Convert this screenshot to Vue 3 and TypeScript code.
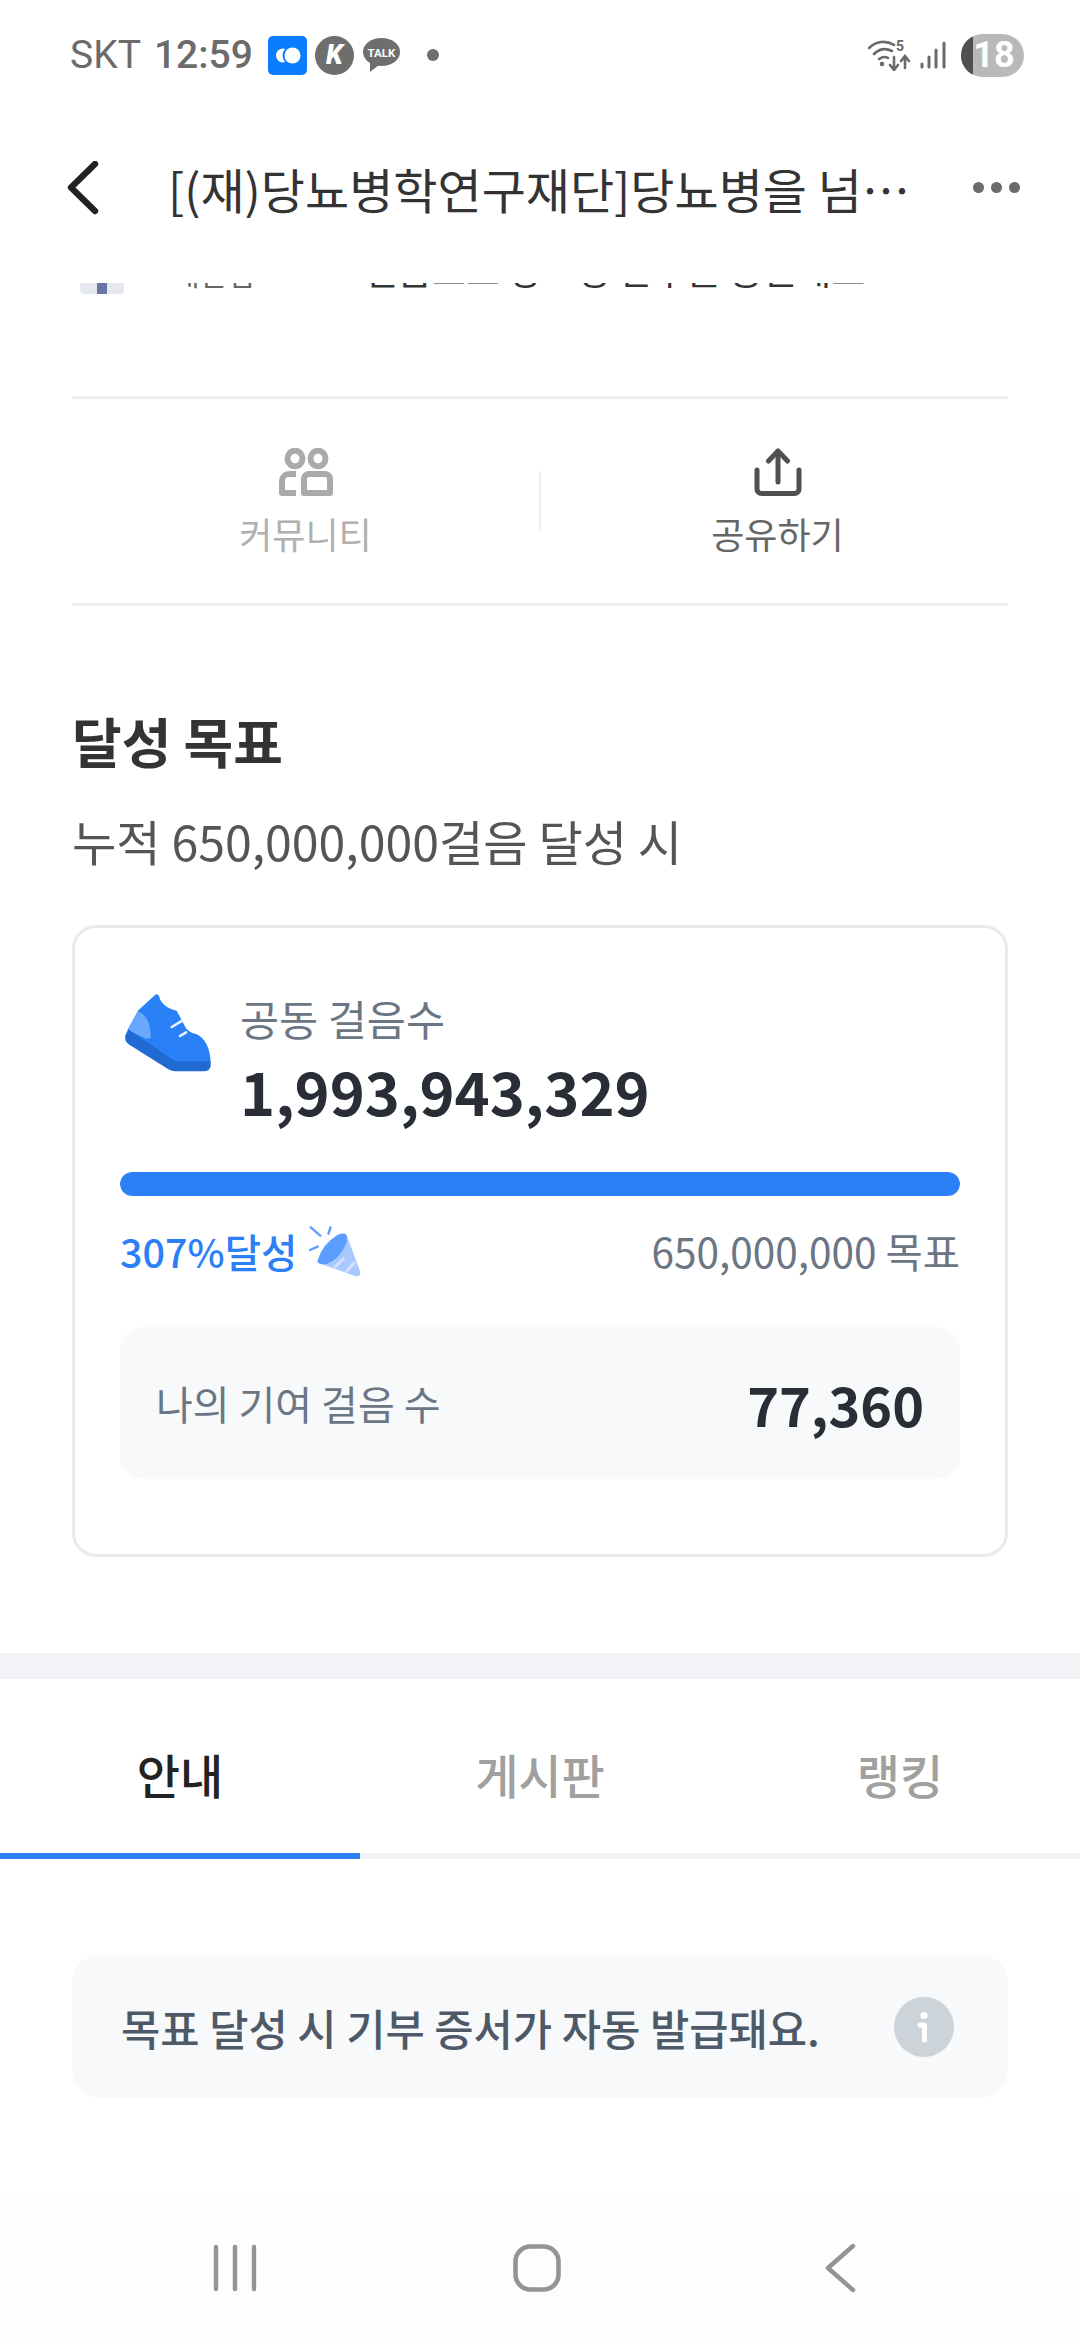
<script setup lang="ts">
const tabs = [
  { label: '안내', active: true },
  { label: '게시판', active: false },
  { label: '랭킹', active: false },
]
const progress = 100
</script>

<template>
  <div class="page">
    <div class="status">
      <div class="status-left">
        <span class="carrier">SKT</span>
        <span class="time">12:59</span>
        <svg class="ic-toss" width="39" height="39" viewBox="0 0 39 39">
          <rect width="39" height="39" rx="5" fill="#0a7cff" />
          <circle cx="15" cy="19.5" r="7" fill="#fff" />
          <circle cx="24.5" cy="19.5" r="10" fill="#0a7cff" />
          <circle cx="24.5" cy="19.5" r="8" fill="#fff" />
        </svg>
        <span class="ic-k">K</span>
        <svg class="ic-talk" width="37" height="34" viewBox="0 0 37 34">
          <ellipse cx="18.5" cy="14" rx="18.5" ry="14" fill="#6e6e6e" />
          <path d="M7 24 L7 34 L16 27 Z" fill="#6e6e6e" />
          <text x="18.5" y="19" text-anchor="middle" class="talk-text">TALK</text>
        </svg>
        <span class="dot"></span>
      </div>
      <div class="status-right">
        <svg width="43" height="32" viewBox="0 0 43 32" fill="none" stroke="#6a6a6a" stroke-width="2.6" stroke-linecap="round">
          <path d="M1 9 C8 2 18 1 26 6" />
          <path d="M6 15 C12 9 18 9 24 12" />
          <path d="M11 20 C14 18 17 17 20 19" />
          <circle cx="14" cy="25" r="1" />
          <path d="M26 18 V30 M22 26 L26 31 L30 26" />
          <path d="M37 29 V18 M33 22 L37 17 L41 22" />
          <text x="28" y="12" class="wifi-5">5</text>
        </svg>
        <svg width="26" height="28" viewBox="0 0 26 28" fill="none" stroke="#6a6a6a" stroke-width="3" stroke-linecap="round">
          <path d="M2 23 V26" />
          <path d="M9 16 V26" />
          <path d="M16 9 V26" />
          <path d="M24 2 V26" />
        </svg>
        <div class="battery"><span class="battery-fill"></span><span class="battery-num">18</span></div>
      </div>
    </div>

    <header class="topbar">
      <svg class="back" width="32" height="54" viewBox="0 0 32 54" fill="none" stroke="#222226" stroke-width="6.4" stroke-linecap="round" stroke-linejoin="round">
        <path d="M28 3 L4 26.5 L28 50" />
      </svg>
      <div class="title">[(재)당뇨병학연구재단]당뇨병을 넘어 건강한 일상으로 함께 걸어요</div>
      <div class="more"><i></i><i></i><i></i></div>
    </header>

    <div class="clipped">
      <span class="thumb"><i></i></span>
      <span class="clip-a">재단법</span>
      <span class="clip-b">걸음으로 당뇨병 환우를 응원해요</span>
    </div>

    <section class="actions">
      <div class="action muted">
        <svg width="54" height="48" viewBox="0 0 54 48" fill="none" stroke="#aaaaaa" stroke-width="6">
          <ellipse cx="16" cy="10.5" rx="7.5" ry="7.8" />
          <ellipse cx="39" cy="10.5" rx="7.5" ry="7.8" />
          <path d="M17 45 H3 V33 a7 7 0 0 1 7 -7 H17" stroke-linejoin="round" />
          <path d="M25 45 V31 a5 5 0 0 1 5 -5 H46 a5 5 0 0 1 5 5 V45 Z" stroke-linejoin="round" />
        </svg>
        <span>커뮤니티</span>
      </div>
      <div class="sep"></div>
      <div class="action share">
        <svg width="48" height="48" viewBox="0 0 48 48" fill="none" stroke="#505050" stroke-width="5" stroke-linecap="round" stroke-linejoin="round">
          <path d="M24 34 V4" />
          <path d="M14.5 13 L24 3 L33.5 13" />
          <path d="M3 22 V41 a4.5 4.5 0 0 0 4.5 4.5 H40.5 a4.5 4.5 0 0 0 4.5 -4.5 V22" />
        </svg>
        <span>공유하기</span>
      </div>
    </section>

    <section class="goal">
      <h2>달성 목표</h2>
      <p class="goal-sub">누적 650,000,000걸음 달성 시</p>

      <div class="card">
        <div class="steps-row">
          <svg class="shoe" width="95" height="82" viewBox="30 20 285 246">
            <path d="M135 29 Q142 24 147 32 Q155 66 200 76 L226 125 Q232 140 260 147 Q298 165 302 230 L195 232 L52 135 L85 75 Z" fill="#2a80f7" />
            <path d="M85 78 Q124 96 122 158 L108 160 L53 134 Z" fill="#6aa8ff" />
            <path d="M55 132 L195 228 L302 228 L302 242 Q300 258 280 258 L195 258 Q185 258 175 252 L58 178 Q42 168 46 150 Z" fill="#2169d3" />
            <path d="M185 125 L217 106 M210 152 L228 141" stroke="#eef5ff" stroke-width="7.5" stroke-linecap="round" fill="none" />
          </svg>
          <div class="steps-text">
            <div class="steps-label">공동 걸음수</div>
            <div class="steps-num">1,993,943,329</div>
          </div>
        </div>

        <div class="bar"><div class="bar-fill" :style="{ width: progress + '%' }"></div></div>

        <div class="bar-meta">
          <div class="pct">
            <span>307%달성</span>
            <svg width="54" height="52" viewBox="625 793 156 152">
              <path d="M664 890 Q690 835 730 818 Q738 816 738 826 L777 930 Q778 946 762 942 L660 906 Q650 900 664 890 Z" fill="#a8c9ff" />
              <path d="M700 918 L730 890 M735 930 L762 900" stroke="#cfe1ff" stroke-width="9" fill="none" />
              <path d="M652 898 Q664 850 710 822 Q732 812 738 826 Q742 850 712 885 Q680 915 660 906 Q650 904 652 898 Z" fill="#5b9eff" />
              <path d="M632 800 L660 824 M690 800 L684 818 M630 866 L652 856" stroke="#5b9eff" stroke-width="7" stroke-linecap="round" fill="none" />
            </svg>
          </div>
          <div class="target">650,000,000 목표</div>
        </div>

        <div class="mine">
          <span class="mine-label">나의 기여 걸음 수</span>
          <span class="mine-num">77,360</span>
        </div>
      </div>
    </section>

    <div class="band"></div>

    <nav class="tabs">
      <div v-for="t in tabs" :key="t.label" class="tab" :class="{ on: t.active }">{{ t.label }}</div>
    </nav>

    <div class="notice">
      <span>목표 달성 시 기부 증서가 자동 발급돼요.</span>
      <svg width="60" height="60" viewBox="0 0 60 60">
        <circle cx="30" cy="30" r="30" fill="#ccd3d9" />
        <circle cx="30" cy="18.5" r="3.6" fill="#fff" />
        <path d="M26 28 H30.5 V43" stroke="#fff" stroke-width="5" fill="none" stroke-linecap="round" stroke-linejoin="round" />
      </svg>
    </div>

    <div class="navbar">
      <svg width="44" height="48" viewBox="0 0 44 48" stroke="#949494" stroke-width="4.4" stroke-linecap="round" fill="none">
        <path d="M3 3 V45 M22 3 V45 M41 3 V45" />
      </svg>
      <svg class="nav-home" width="48" height="48" viewBox="0 0 48 48" stroke="#949494" stroke-width="4.6" fill="none">
        <rect x="2.5" y="2.5" width="43" height="43" rx="15" />
      </svg>
      <svg width="32" height="50" viewBox="0 0 32 50" stroke="#949494" stroke-width="4.4" stroke-linecap="round" stroke-linejoin="round" fill="none">
        <path d="M29 3 L4 25 L29 47" />
      </svg>
    </div>
  </div>
</template>

<style scoped>
.page {
  width: 1080px;
  height: 2340px;
  overflow: hidden;
  background: #fff;
  font-family: "Noto Sans CJK KR", "Noto Sans", sans-serif;
  color: #333;
  display: flex;
  flex-direction: column;
}
.status {
  height: 110px;
  flex: none;
  box-sizing: border-box;
  padding: 0 56px 0 70px;
  display: flex;
  align-items: center;
  justify-content: space-between;
}
.status-left {
  display: flex;
  align-items: center;
}
.carrier,
.time {
  font-family: Roboto, sans-serif;
  font-size: 39px;
  color: #6b6b6b;
  line-height: 44px;
}
.time {
  font-weight: 500;
  margin-left: 13px;
}
.ic-toss {
  margin-left: 15px;
}
.ic-k {
  width: 39px;
  height: 39px;
  margin-left: 8px;
  border-radius: 50%;
  background: #6e6e6e;
  color: #fff;
  font: italic 900 27px/39px Roboto, sans-serif;
  text-align: center;
}
.ic-talk {
  margin-left: 9px;
}
.talk-text {
  font: 700 11.5px Roboto, sans-serif;
  fill: #fff;
}
.dot {
  width: 12px;
  height: 12px;
  border-radius: 50%;
  background: #6e6e6e;
  margin-left: 27px;
}
.status-right {
  display: flex;
  align-items: center;
  gap: 9px;
}
.battery {
  width: 63px;
  height: 43px;
  margin-left: 6px;
  border-radius: 21.5px;
  background: #b9b9b9;
  position: relative;
  overflow: hidden;
  display: flex;
  align-items: center;
  justify-content: center;
}
.battery-fill {
  position: absolute;
  left: 0;
  top: 0;
  bottom: 0;
  width: 12px;
  background: #505050;
}
.wifi-5 {
  font: 700 14px Roboto, sans-serif;
  fill: #666;
  stroke: none;
}
.battery-num {
  font: 700 36px/43px Roboto, sans-serif;
  color: #fff;
  margin-left: 3px;
}
.topbar {
  height: 173px;
  flex: none;
  box-sizing: border-box;
  padding: 0 60px 18px 67px;
  display: flex;
  align-items: center;
}
.back {
  flex: none;
}
.title {
  width: 742px;
  margin-left: 69px;
  font-size: 48px;
  line-height: 60px;
  color: #333;
  white-space: nowrap;
  overflow: hidden;
  text-overflow: ellipsis;
}
.more {
  margin-left: auto;
  display: flex;
  gap: 7px;
}
.more i {
  width: 11px;
  height: 11px;
  border-radius: 50%;
  background: #6b6b6b;
}
.clipped {
  height: 11px;
  flex: none;
  padding: 0 72px 0 80px;
  display: flex;
  align-items: flex-end;
  overflow: hidden;
  position: relative;
}
.thumb {
  width: 44px;
  height: 11px;
  flex: none;
  background: #e5e8ef;
  border-radius: 0 0 4px 4px;
  display: flex;
  justify-content: center;
}
.thumb i {
  width: 10px;
  background: #6b74a6;
}
.clip-a,
.clip-b {
  line-height: 52px;
  white-space: nowrap;
  flex: none;
}
.clip-a {
  font-size: 30px;
  color: #666;
  margin-left: 48px;
  transform: translateY(4px);
}
.clip-b {
  font-size: 37px;
  margin-left: 109px;
  color: #333;
  transform: translateY(1px);
}
.actions {
  margin: 102px 72px 0;
  height: 210px;
  flex: none;
  border-top: 3px solid #eeeef2;
  border-bottom: 3px solid #eeeef2;
  display: flex;
  align-items: center;
  box-sizing: border-box;
}
.action {
  flex: 0 0 467px;
  box-sizing: border-box;
  display: flex;
  flex-direction: column;
  align-items: center;
  gap: 14px;
  font-size: 36px;
  line-height: 46px;
  color: #666;
  padding-top: 2px;
}
.action svg {
  display: block;
}
.action.muted {
  color: #b0b0b0;
}
.action.share {
  padding-left: 6px;
}
.sep {
  width: 2px;
  height: 60px;
  background: #eeeeee;
  flex: none;
}
.goal {
  padding: 0 72px;
  flex: none;
}
.goal h2 {
  margin: 100px 0 0;
  font-size: 54px;
  line-height: 70px;
  font-weight: 700;
  color: #333;
}
.goal-sub {
  margin: 34px 0 0;
  font-size: 48.2px;
  line-height: 60px;
  color: #555;
}
.card {
  margin-top: 55px;
  box-sizing: border-box;
  height: 632px;
  border: 3px solid #e8eaee;
  border-radius: 24px;
  padding: 62px 45px 0;
}
.steps-row {
  display: flex;
  align-items: flex-start;
}
.shoe {
  flex: none;
  display: block;
  margin-top: 2px;
}
.steps-text {
  margin-left: 25px;
}
.steps-label {
  font-size: 42.5px;
  line-height: 56px;
  color: #6b7684;
}
.steps-num {
  margin-top: 4px;
  font-size: 59.6px;
  line-height: 80px;
  font-weight: 700;
  color: #282d36;
}
.bar {
  margin-top: 42px;
  height: 24px;
  border-radius: 12px;
  background: #eef0f3;
  overflow: hidden;
}
.bar-fill {
  height: 100%;
  background: #2b80f8;
  border-radius: 12px;
}
.bar-meta {
  margin-top: 27px;
  display: flex;
  align-items: center;
  justify-content: space-between;
  height: 56px;
}
.pct {
  display: flex;
  align-items: center;
  gap: 11px;
  font-size: 39.5px;
  font-weight: 500;
  line-height: 56px;
  color: #2b80f8;
}
.target {
  font-size: 40.5px;
  line-height: 56px;
  color: #6b7684;
}
.mine {
  margin-top: 48px;
  height: 152px;
  border-radius: 24px;
  background: #f8f9fb;
  padding: 0 36px;
  display: flex;
  align-items: center;
  justify-content: space-between;
}
.mine-label {
  font-size: 40px;
  color: #6b7684;
}
.mine-num {
  font-size: 54px;
  font-weight: 700;
  color: #282d36;
}
.band {
  margin-top: 96px;
  height: 26px;
  flex: none;
  background: #f2f3f7;
}
.tabs {
  height: 180px;
  flex: none;
  display: flex;
  border-bottom: 6px solid #f2f3f7;
  box-sizing: border-box;
}
.tab {
  flex: 1;
  display: flex;
  align-items: center;
  justify-content: center;
  margin-bottom: -6px;
  padding-top: 14px;
  border-bottom: 6px solid transparent;
  font-size: 47px;
  font-weight: 500;
  color: #a0a0a0;
}
.tab.on {
  color: #222;
  border-bottom-color: #2b80f8;
}
.notice {
  margin: 96px 72px 0;
  height: 143px;
  flex: none;
  box-sizing: border-box;
  border-radius: 28px;
  background: #f8f9fb;
  padding: 0 54px 0 49px;
  display: flex;
  align-items: center;
  justify-content: space-between;
  font-size: 42.7px;
  font-weight: 500;
  color: #4e5968;
}
.navbar {
  flex: 1;
  margin-top: 100px;
  background: #fefcfe;
  display: flex;
  align-items: center;
  padding: 0 0 3px 213px;
}
.nav-home {
  margin: 0 263px 0 256px;
}
</style>
